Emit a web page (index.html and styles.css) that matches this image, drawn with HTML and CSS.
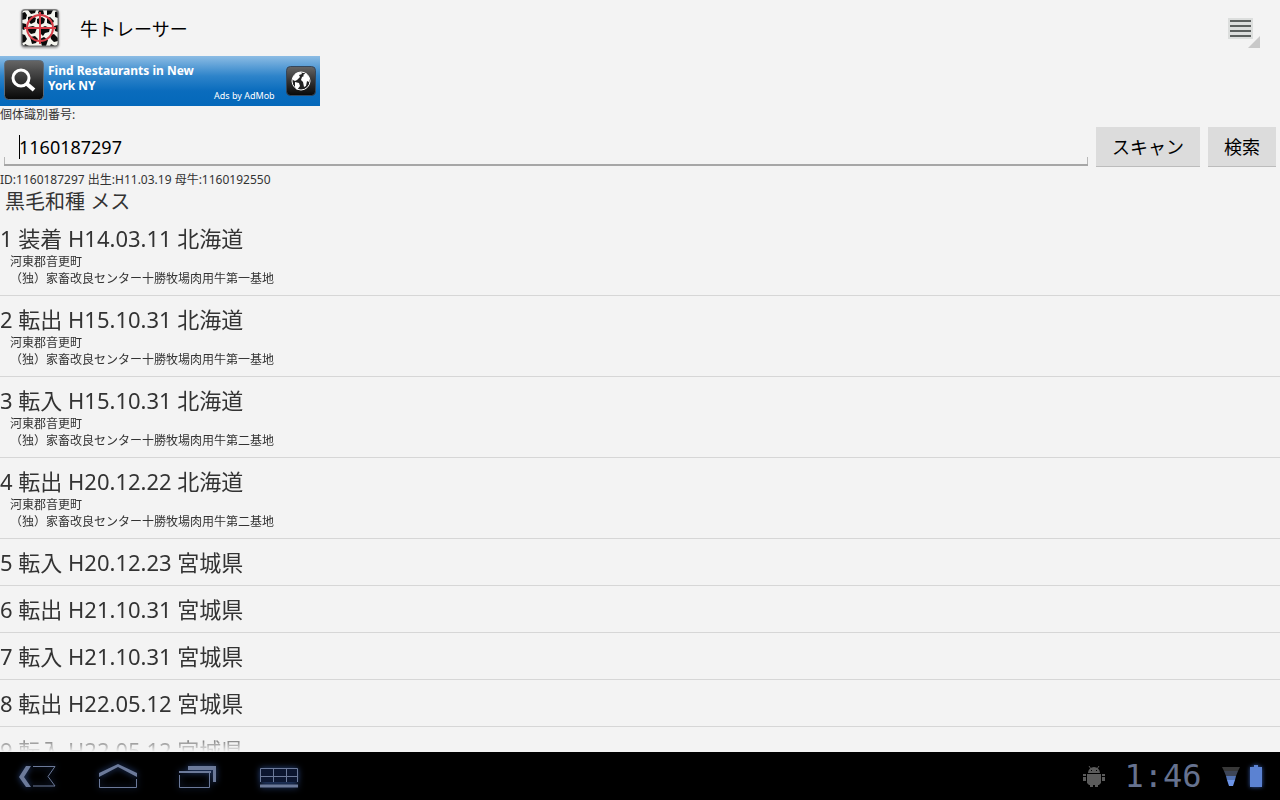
FILE: index.html
```html
<!DOCTYPE html>
<html lang="ja">
<head>
  <meta charset="UTF-8">
  <meta name="viewport" content="width=device-width, initial-scale=1.0">
  <title>牛トレーサー</title>
  <link rel="stylesheet" href="styles.css">
</head>
<body>

  <!-- Action bar -->
  <header class="action-bar">
    <svg class="app-icon" viewBox="0 0 40 40" aria-hidden="true">
      <defs>
        <clipPath id="cow"><rect x="2" y="2" width="36" height="36" rx="3"/></clipPath>
      </defs>
      <rect x="1" y="1" width="38" height="38" rx="4" fill="#888"/>
      <rect x="2" y="2" width="36" height="36" rx="3" fill="#f4f4ee"/>
      <g clip-path="url(#cow)" fill="#0b0b0b">
        <path d="M2 5l3-1 2 3-1 4-4 1zM8 2h8l-1 3-4 1zM19 2h4l1 4-3 2-3-3zM27 2h6l-2 4-4 1zM35 4l3-1v7l-3-1z"/>
        <path d="M8 9l4-1 4 2-1 4-4 2-3-3zM17 11l5-2 3 2-1 4-4 2-3-2zM27 10l3-1 4 4-2 4-5-2zM2 15l4 1 1 3-3 3-2-1z"/>
        <path d="M8 19l5-1 4 2-2 5-4 1-3-3zM21 20l4-2 5 2-1 4-4 1-2 3-3-3zM34 18l4-1v7l-3-1z"/>
        <path d="M2 26l3 1 2 4-2 3-3 1zM10 29l5-1 3 3-2 4-4 1zM20 31l4-2 4 3-2 6h-4zM30 27l4-1 4 4v3l-4 1-3-3zM31 36l4 2h-5zM5 36l4 2H4z"/>
      </g>
      <g fill="none" stroke="#d9404a">
        <circle cx="20" cy="20" r="13" stroke-width="2"/>
        <path d="M20 4v32M4 20h32" stroke-width="2"/>
      </g>
      <rect x="2" y="2" width="36" height="36" rx="3" fill="none" stroke="#777"/>
    </svg>
    <h1 class="app-title">牛トレーサー</h1>
    <button class="menu-button" type="button" aria-label="メニュー">
      <svg viewBox="0 0 34 32" aria-hidden="true">
        <rect x="2" y="2" width="25" height="21" fill="#dcdedd"/>
        <path d="M4 5h21M4 10h21M4 15h21M4 20h21" stroke="#5c605f" stroke-width="2"/>
        <path d="M34 20v12H22z" fill="#c8c8c8"/>
      </svg>
    </button>
  </header>

  <main class="content">

    <!-- Ad banner -->
    <a class="ad" href="#">
      <svg class="ad-search" viewBox="0 0 40 40" aria-hidden="true">
        <defs>
          <linearGradient id="dark" x1="0" y1="0" x2="0" y2="1">
            <stop offset="0" stop-color="#666"/>
            <stop offset="0.5" stop-color="#333"/>
            <stop offset="1" stop-color="#080808"/>
          </linearGradient>
        </defs>
        <rect x="0.5" y="0.5" width="39" height="39" rx="4" fill="url(#dark)" stroke="#5c6a78"/>
        <circle cx="17" cy="18" r="8" fill="none" stroke="#fff" stroke-width="3"/>
        <path d="M23 24l7 6" stroke="#fff" stroke-width="4"/>
      </svg>
      <span class="ad-text">Find Restaurants in New York NY</span>
      <span class="ad-by">Ads by AdMob</span>
      <svg class="ad-globe" viewBox="0 0 30 30" aria-hidden="true">
        <rect x="0.5" y="0.5" width="29" height="29" rx="4" fill="url(#dark)" stroke="#34475c"/>
        <circle cx="15" cy="15" r="9" fill="#222" stroke="#fff"/>
        <path d="M7 11l3-4 5-1 1 2-3 1 1 2-3 3-2 1-2-1zM9 16l4 1 1 3-3 4-2-3zM17 9l3-2 3 4v5l-2-1-1 5-2 1-1-5-2-2 1-3 2-1z" fill="#fff"/>
      </svg>
    </a>

    <!-- Search form -->
    <form class="search" onsubmit="return false">
      <label class="search-label" for="cowId">個体識別番号:</label>
      <div class="search-row">
        <div class="field">
          <input class="field-input" id="cowId" type="text" value="1160187297">
          <span class="caret"></span>
        </div>
        <button class="button" type="button">スキャン</button>
        <button class="button" type="submit">検索</button>
      </div>
    </form>

    <!-- Result -->
    <p class="summary">ID:1160187297 出生:H11.03.19 母牛:1160192550</p>
    <p class="breed">黒毛和種 メス</p>

    <ol class="history">
      <li class="entry">
        <h2 class="entry-title">1 装着 H14.03.11 北海道</h2>
        <p class="entry-detail">河東郡音更町</p>
        <p class="entry-detail">（独）家畜改良センター十勝牧場肉用牛第一基地</p>
      </li>
      <li class="entry">
        <h2 class="entry-title">2 転出 H15.10.31 北海道</h2>
        <p class="entry-detail">河東郡音更町</p>
        <p class="entry-detail">（独）家畜改良センター十勝牧場肉用牛第一基地</p>
      </li>
      <li class="entry">
        <h2 class="entry-title">3 転入 H15.10.31 北海道</h2>
        <p class="entry-detail">河東郡音更町</p>
        <p class="entry-detail">（独）家畜改良センター十勝牧場肉用牛第二基地</p>
      </li>
      <li class="entry">
        <h2 class="entry-title">4 転出 H20.12.22 北海道</h2>
        <p class="entry-detail">河東郡音更町</p>
        <p class="entry-detail">（独）家畜改良センター十勝牧場肉用牛第二基地</p>
      </li>
      <li class="entry"><h2 class="entry-title">5 転入 H20.12.23 宮城県</h2></li>
      <li class="entry"><h2 class="entry-title">6 転出 H21.10.31 宮城県</h2></li>
      <li class="entry"><h2 class="entry-title">7 転入 H21.10.31 宮城県</h2></li>
      <li class="entry"><h2 class="entry-title">8 転出 H22.05.12 宮城県</h2></li>
      <li class="entry"><h2 class="entry-title">9 転入 H22.05.12 宮城県</h2></li>
    </ol>
  </main>

  <!-- System bar -->
  <footer class="system-bar">
    <button class="nav-button" type="button" aria-label="戻る">
      <svg viewBox="0 0 40 24" aria-hidden="true">
        <path d="M8 2h5L6 13l7 10H8L1 13z" fill="#6c7a9a"/>
        <path d="M15 2.500h22l-7 10 7 9.500H15" fill="none" stroke="#6c7a9a"/>
      </svg>
    </button>
    <button class="nav-button" type="button" aria-label="ホーム">
      <svg viewBox="0 0 40 24" aria-hidden="true">
        <path d="M1 13v-4L20 0l19 9v4L20 3z" fill="#6c7a9a"/>
        <path d="M1.500 15v8.500h37V15" fill="none" stroke="#6c7a9a"/>
      </svg>
    </button>
    <button class="nav-button" type="button" aria-label="最近使ったアプリ">
      <svg viewBox="0 0 40 24" aria-hidden="true">
        <path d="M10 2h28v16h-3V6H10z" fill="#6c7a9a"/>
        <path d="M1 8h32" stroke="#6c7a9a" stroke-width="2"/>
        <path d="M1.500 11v12.500h30V8" fill="none" stroke="#6c7a9a"/>
      </svg>
    </button>
    <button class="nav-button" type="button" aria-label="キーボード">
      <svg viewBox="0 0 40 24" aria-hidden="true">
        <path d="M2.500 18V4.500h37V18M2.500 12.500h37M15.500 4v14M28.500 4v14" fill="#0c1630" stroke="#6c7a9a"/>
        <path d="M2 22h38" stroke="#6c7a9a" stroke-width="3"/>
      </svg>
    </button>

    <div class="status">
      <svg class="status-android" viewBox="0 0 22 22" fill="#5b5b5b" aria-hidden="true">
        <path d="M5 8a6 6 0 0 1 12 0zM4 9h14v9l-2 2H6l-2-2zM0 9h3v7H0zM19 9h3v7h-3zM7 20h3v2H7zM12 20h3v2h-3z"/>
        <path d="M6 1l2 3M16 1l-2 3" stroke="#5b5b5b"/>
        <path d="M8 5h1v1H8zM13 5h1v1h-1zM0 11h3v1H0zM19 11h3v1h-3z" fill="#000"/>
      </svg>
      <time class="clock">1:46</time>
      <svg class="status-signal" viewBox="0 0 20 22" aria-hidden="true">
        <path d="M1 2h18l-2 4H3z" fill="#383838"/>
        <path d="M3 6h14l-2 5H5z" fill="#3d4557"/>
        <path d="M5 11h10l-1 4H6z" fill="#5273b4"/>
        <path d="M6 15h8l-2 6H8z" fill="#6b93e6"/>
      </svg>
      <svg class="status-battery" viewBox="0 0 12 22" aria-hidden="true">
        <path d="M4 0h4v2h4v20H0V2h4z" fill="#5b82d2"/>
      </svg>
    </div>
  </footer>

</body>
</html>
```
FILE: styles.css
```css
* {
  box-sizing: border-box;
}

body {
  margin: 0;
  height: 100vh;
  display: flex;
  flex-direction: column;
  background: #f3f3f3;
  color: #333;
  font-family: "Noto Sans", "Noto Sans CJK JP", sans-serif;
  font-size: 12px;
}

h1, h2, p, ol {
  margin: 0;
  padding: 0;
  font-weight: normal;
}

button {
  border: none;
  font-family: inherit;
  cursor: pointer;
}

svg {
  display: block;
}

/* Action bar */
.action-bar {
  flex: none;
  display: flex;
  align-items: center;
  height: 56px;
  padding: 0 20px;
  gap: 20px;
}

.app-icon {
  width: 40px;
  height: 40px;
  filter: drop-shadow(0 1px 1px rgba(0, 0, 0, 0.4));
}

.app-title {
  flex: 1;
  color: #000;
  font-size: 18px;
}

.menu-button {
  width: 34px;
  height: 40px;
  padding: 8px 0 0;
  background: none;
}

/* Content */
.content {
  flex: 1;
  min-height: 0;
  display: flex;
  flex-direction: column;
}

.ad {
  flex: none;
  display: flex;
  gap: 4px;
  width: 320px;
  height: 50px;
  padding: 4px;
  background: linear-gradient(#8cbce4, #2e84ca 40%, #0a6cbd 70%, #0468ba);
  color: #fff;
  text-decoration: none;
}

.ad-search {
  flex: none;
  width: 40px;
  height: 40px;
}

.ad-text {
  width: 162px;
  padding-top: 3px;
  font-size: 12px;
  font-weight: bold;
  line-height: 15px;
}

.ad-by {
  align-self: flex-end;
  font-size: 9px;
  line-height: 12px;
  white-space: nowrap;
}

.ad-globe {
  flex: none;
  align-self: center;
  width: 30px;
  height: 30px;
  margin-left: auto;
}

/* Search form */
.search {
  flex: none;
}

.search-label {
  display: block;
  line-height: 17px;
}

.search-row {
  display: flex;
  gap: 8px;
  padding: 4px;
}

.field {
  position: relative;
  flex: 1;
  height: 39px;
}

.field-input {
  width: 100%;
  height: 39px;
  padding: 3px 15px 0;
  border: none;
  border-bottom: 2px solid #a6a6a6;
  background:
    linear-gradient(#b8b8b8, #b8b8b8) left bottom / 1px 7px no-repeat,
    linear-gradient(#b8b8b8, #b8b8b8) right bottom / 1px 7px no-repeat;
  color: #000;
  font-family: inherit;
  font-size: 18px;
  outline: none;
}

.caret {
  position: absolute;
  left: 15px;
  top: 8px;
  width: 1px;
  height: 24px;
  background: #000;
}

.button {
  height: 39px;
  padding: 0 16px 2px;
  background: #dcdcdc;
  box-shadow: 0 1px 0 #bcbcbc;
  color: #000;
  font-size: 18px;
}

/* Result */
.summary {
  flex: none;
  padding-top: 2px;
  line-height: 16px;
}

.breed {
  flex: none;
  padding-left: 5px;
  font-size: 20px;
  line-height: 27px;
}

.history {
  flex: 1;
  min-height: 0;
  overflow: hidden;
  list-style: none;
  -webkit-mask-image: linear-gradient(to top, transparent, #000 20px);
  mask-image: linear-gradient(to top, transparent, #000 20px);
}

.entry {
  padding: 8px 0;
  border-bottom: 1px solid #d6d6d6;
}

.entry-title {
  font-size: 22px;
  line-height: 30px;
}

.entry-detail {
  padding-left: 10px;
  line-height: 17px;
}

/* System bar */
.system-bar {
  flex: none;
  display: flex;
  align-items: center;
  gap: 40px;
  height: 48px;
  padding: 0 18px;
  background: #000;
}

.nav-button {
  width: 40px;
  height: 24px;
  padding: 0;
  background: none;
}

.nav-button svg {
  overflow: visible;
  filter: drop-shadow(0 0 3px #2a4680);
}

.status {
  display: flex;
  align-items: center;
  gap: 9px;
  margin-left: auto;
}

.status-android {
  width: 22px;
  height: 22px;
}

.clock {
  width: 98px;
  color: #66728f;
  font-family: "DejaVu Sans Mono", monospace;
  font-size: 32px;
  line-height: 48px;
  text-align: center;
}

.status-signal {
  width: 20px;
  height: 22px;
}

.status-battery {
  width: 12px;
  height: 22px;
  filter: drop-shadow(0 0 2px #3358a8);
}
```
